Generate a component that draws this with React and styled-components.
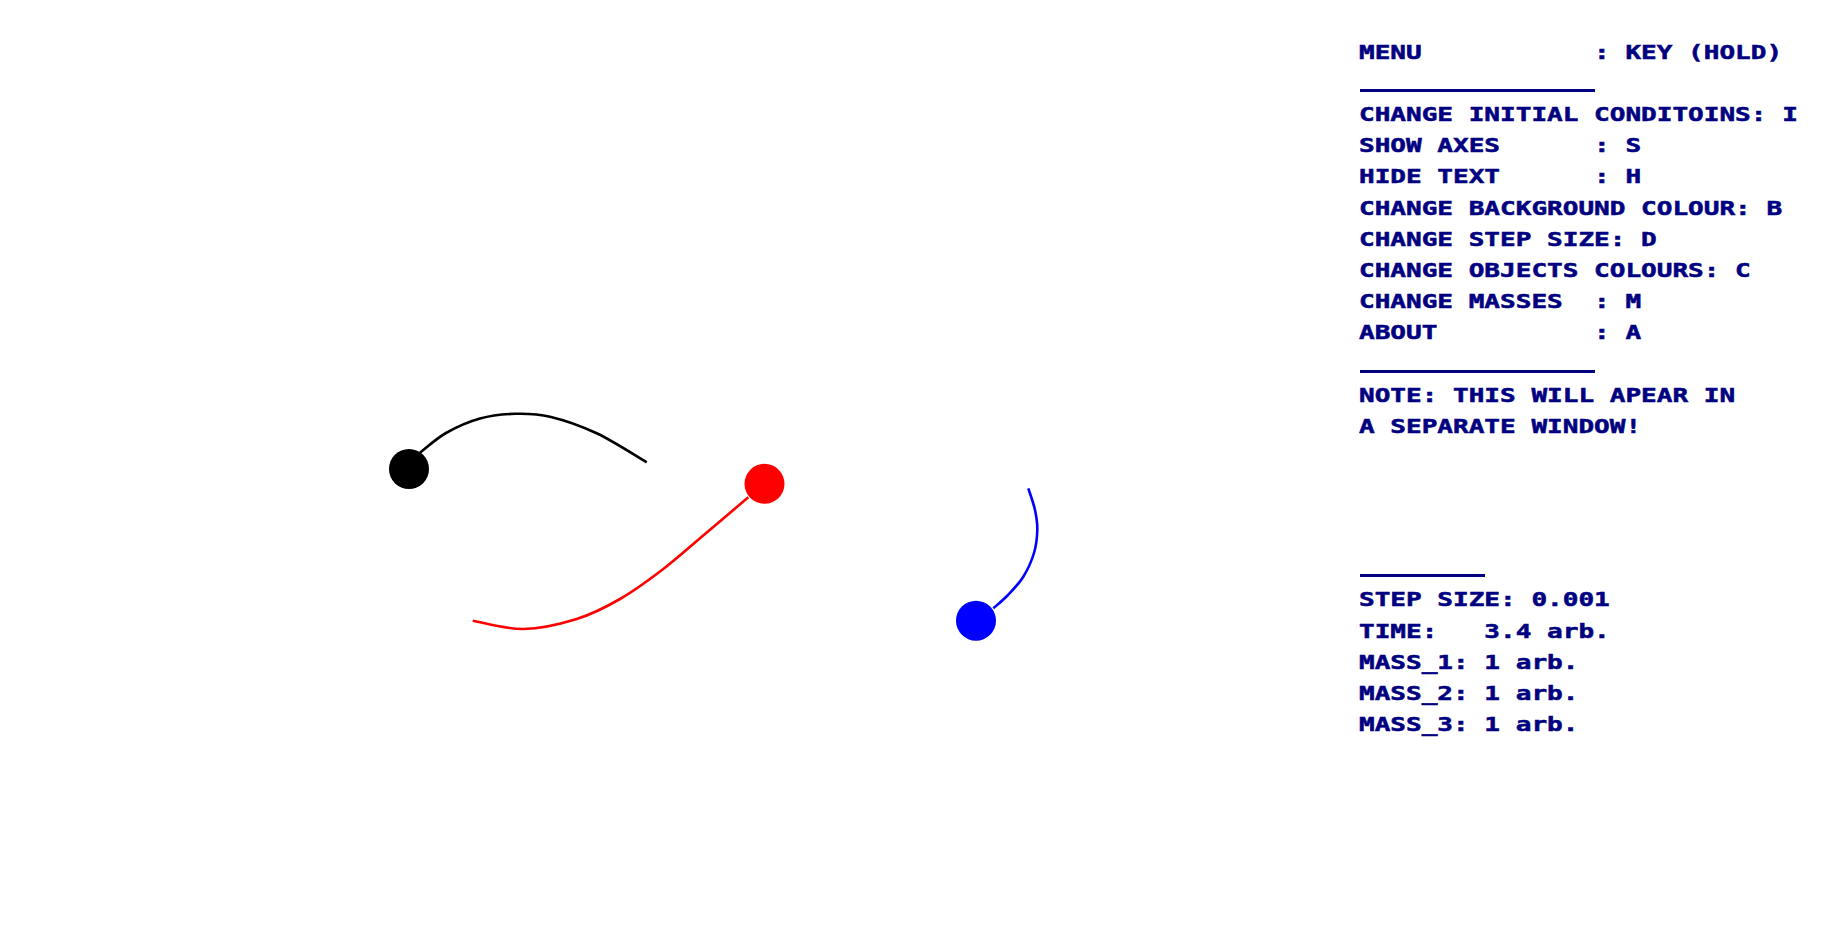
import React from "react";
import styled, { createGlobalStyle } from "styled-components";

const GlobalStyle = createGlobalStyle`
  html, body { margin: 0; padding: 0; background: #ffffff; }
  body { overflow: hidden; }
`;

const CELL = 15.67;
const PITCH = 31.2;
const INK = "#000080";

const Screen = styled.div`
  display: flex;
  flex-direction: row;
  width: 1829px;
  height: 946px;
  overflow: hidden;
  background: #ffffff;
`;

const Scene = styled.svg`
  display: block;
  flex: 0 0 1359px;
  height: 946px;
`;

const Panel = styled.div`
  flex: 1;
  display: flex;
  flex-direction: column;
  gap: 111.2px;
  padding-top: 36.65px;
  font-family: "DejaVu Sans Mono", "Liberation Mono", monospace;
  font-weight: bold;
  font-size: 19px;
  color: ${INK};
`;

const Block = styled.div`
  display: flex;
  flex-direction: column;
  align-items: flex-start;
`;

const Line = styled.div`
  height: ${PITCH}px;
  line-height: ${PITCH}px;
  white-space: pre;
  -webkit-text-stroke: 0.5px ${INK};
  transform: scaleX(1.37);
  transform-origin: left center;
`;

const Rule = styled.div`
  height: ${PITCH}px;
  box-sizing: border-box;
  padding-top: ${(p) => p.offset}px;
  padding-left: 1px;
  &::after {
    content: "";
    display: block;
    height: 3px;
    width: ${(p) => p.cells * CELL}px;
    background: ${INK};
  }
`;

function smoothPath(pts) {
  if (pts.length < 2) return "";
  let d = `M ${pts[0][0]} ${pts[0][1]}`;
  for (let i = 0; i < pts.length - 1; i++) {
    const p0 = pts[i - 1] || pts[i];
    const p1 = pts[i];
    const p2 = pts[i + 1];
    const p3 = pts[i + 2] || p2;
    const c1x = p1[0] + (p2[0] - p0[0]) / 6;
    const c1y = p1[1] + (p2[1] - p0[1]) / 6;
    const c2x = p2[0] - (p3[0] - p1[0]) / 6;
    const c2y = p2[1] - (p3[1] - p1[1]) / 6;
    d += ` C ${c1x} ${c1y} ${c2x} ${c2y} ${p2[0]} ${p2[1]}`;
  }
  return d;
}

const bodies = [
  {
    color: "#000000",
    center: [409, 469],
    trail: [
      [420, 452.7], [446, 433], [480, 418.5], [515, 413.8],
      [550, 416.7], [596.7, 433.3], [646.7, 462.3],
    ],
  },
  {
    color: "#ff0000",
    center: [764.5, 483.8],
    trail: [
      [748.3, 497.3], [705, 534], [663.3, 569], [620, 599],
      [576.7, 619], [523.3, 629], [472.7, 620.7],
    ],
  },
  {
    color: "#0000ff",
    center: [976, 620.7],
    trail: [
      [1028.3, 488.3], [1035, 510], [1037.3, 530], [1034, 553],
      [1023.3, 576.7], [1008, 595], [993.3, 608.3],
    ],
  },
];

const menu = [
  "CHANGE INITIAL CONDITOINS: I",
  "SHOW AXES      : S",
  "HIDE TEXT      : H",
  "CHANGE BACKGROUND COLOUR: B",
  "CHANGE STEP SIZE: D",
  "CHANGE OBJECTS COLOURS: C",
  "CHANGE MASSES  : M",
  "ABOUT          : A",
];

const status = [
  "STEP SIZE: 0.001",
  "TIME:   3.4 arb.",
  "MASS_1: 1 arb.",
  "MASS_2: 1 arb.",
  "MASS_3: 1 arb.",
];

export default function App() {
  return (
    <>
      <GlobalStyle />
      <Screen>
        <Scene viewBox="0 0 1359 946" width="1359" height="946">
          {bodies.map((b, i) => (
            <g key={i}>
              <path
                d={smoothPath(b.trail)}
                fill="none"
                stroke={b.color}
                strokeWidth="2.6"
                strokeLinecap="butt"
              />
              <circle cx={b.center[0]} cy={b.center[1]} r="20" fill={b.color} />
            </g>
          ))}
        </Scene>
        <Panel>
          <Block>
            <Line>{"MENU           : KEY (HOLD)"}</Line>
            <Rule cells={15} offset={21.2} />
            {menu.map((t) => (
              <Line key={t}>{t}</Line>
            ))}
            <Rule cells={15} offset={21.2} />
            <Line>{"NOTE: THIS WILL APEAR IN"}</Line>
            <Line>{"A SEPARATE WINDOW!"}</Line>
          </Block>
          <Block>
            <Rule cells={8} offset={20.5} />
            {status.map((t) => (
              <Line key={t}>{t}</Line>
            ))}
          </Block>
        </Panel>
      </Screen>
    </>
  );
}
